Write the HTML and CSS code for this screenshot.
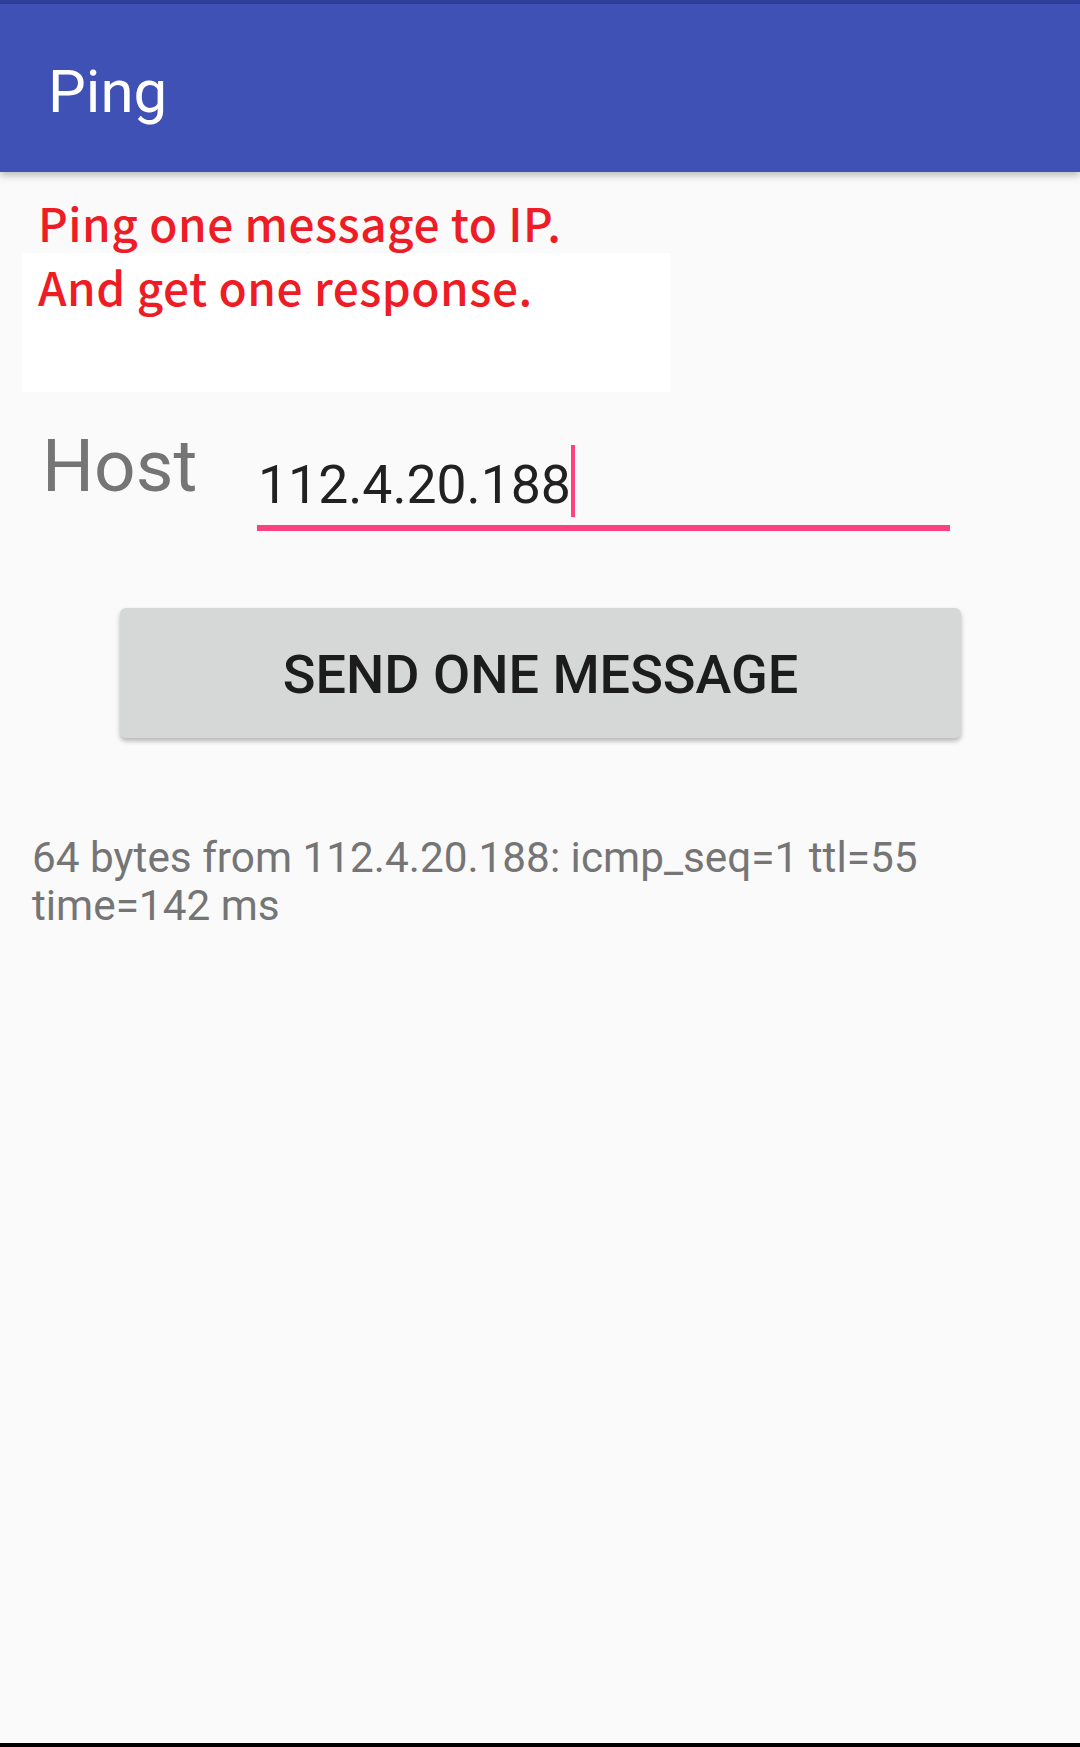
FILE: index.html
```html
<!DOCTYPE html>
<html lang="en">
<head>
<meta charset="utf-8">
<title>Ping</title>
<link rel="stylesheet" href="styles.css">
</head>
<body>
<div class="screen">
  <div class="statusbar"></div>
  <header class="toolbar">
    <h1 class="toolbar-title">Ping</h1>
  </header>
  <main class="content">
    <div class="note">
      <div class="note-line1">Ping one message to IP.</div>
      <div class="note-box">And get one response.</div>
    </div>
    <div class="host-row">
      <div class="host-label">Host</div>
      <div class="host-field">
        <div class="host-text"><span class="host-value">112.4.20.188</span></div>
        <div class="host-underline"></div>
      </div>
    </div>
    <div class="button-row">
      <button class="send-button">SEND ONE MESSAGE</button>
    </div>
    <div class="result">64 bytes from 112.4.20.188: icmp_seq=1 ttl=55<br>time=142 ms</div>
  </main>
  <div class="navbar"></div>
</div>
</body>
</html>
```

FILE: styles.css
```css
html, body {
  margin: 0;
  padding: 0;
}
body {
  background: #fafafa;
  font-family: Roboto, "Liberation Sans", sans-serif;
}
.screen {
  display: flex;
  flex-direction: column;
  min-height: 1747px;
}
.statusbar {
  height: 4px;
  background: #303f9f;
}
.toolbar {
  position: relative;
  z-index: 2;
  box-sizing: border-box;
  height: 168px;
  padding: 58px 0 0 48px;
  background: #3f51b5;
  box-shadow: 0 3px 8px rgba(0, 0, 0, 0.28);
}
.toolbar-title {
  margin: 0;
  font-size: 60px;
  line-height: 60px;
  font-weight: 400;
  color: #ffffff;
}
.content {
  flex: 1;
  display: flex;
  flex-direction: column;
}
.note {
  margin: 17px 0 0 22px;
  width: 648px;
  font-family: "Noto Sans CJK SC", "Noto Sans", sans-serif;
  font-weight: 500;
  font-size: 46px;
  letter-spacing: 0.5px;
  color: #ee1c25;
}
.note-line1 {
  height: 64px;
  line-height: 66px;
  padding-left: 16px;
}
.note-box {
  box-sizing: border-box;
  height: 139px;
  background: #ffffff;
  padding-left: 16px;
  line-height: 66px;
}
.host-row {
  display: flex;
  margin-top: 38px;
}
.host-label {
  width: 215px;
  padding-left: 42px;
  font-size: 73px;
  line-height: 73px;
  color: #757575;
}
.host-field {
  width: 693px;
  margin-top: 28px;
}
.host-text {
  font-size: 53.5px;
  line-height: 53.5px;
  color: #212121;
  padding-left: 1px;
}
.host-value {
  padding-top: 8px;
  padding-bottom: 1px;
  border-right: 4px solid #ff4081;
}
.host-underline {
  margin-top: 13px;
  height: 6px;
  background: #ff4081;
}
.button-row {
  display: flex;
  margin-top: 77px;
  padding-left: 120px;
}
.send-button {
  width: 841px;
  height: 130px;
  border: none;
  border-radius: 6px;
  background: #d6d7d7;
  box-shadow: 0 3px 5px rgba(0, 0, 0, 0.28);
  font-family: Roboto, "Liberation Sans", sans-serif;
  font-weight: 500;
  font-size: 54px;
  color: #1c1c1c;
  padding: 0;
  padding-top: 4px;
}
.result {
  margin-top: 96px;
  padding-left: 32px;
  font-size: 42.3px;
  line-height: 48px;
  color: #757575;
}
.navbar {
  height: 4px;
  background: #000000;
}
```
